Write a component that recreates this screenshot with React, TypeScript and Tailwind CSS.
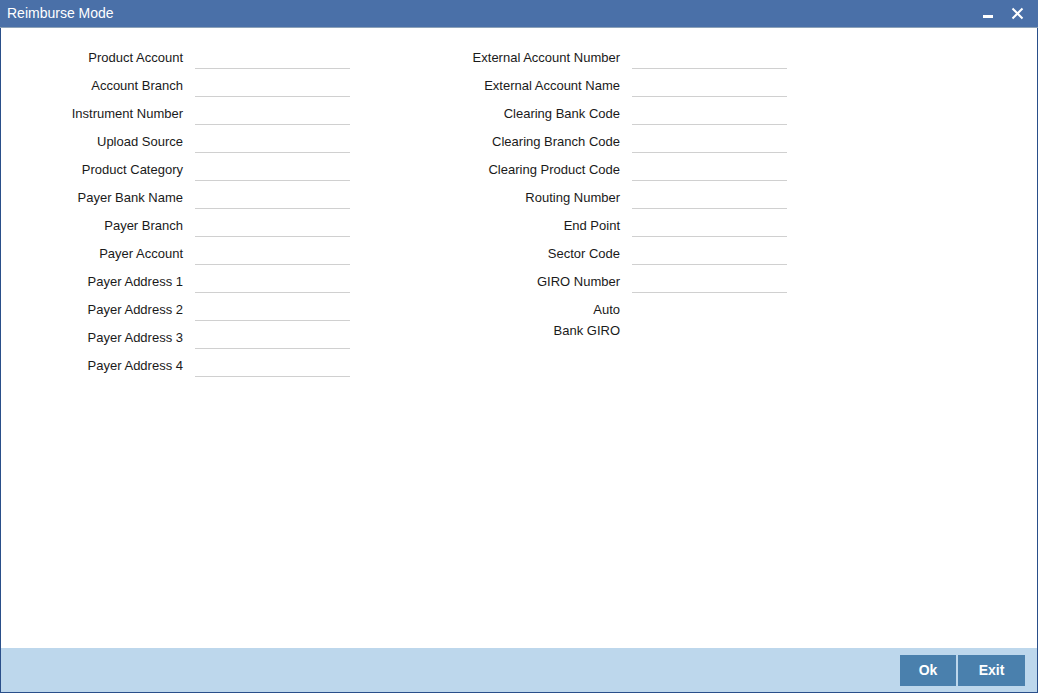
import React from "react";

// Field labels for each column of the reimburse form
const leftFields = [
  "Product Account",
  "Account Branch",
  "Instrument Number",
  "Upload Source",
  "Product Category",
  "Payer Bank Name",
  "Payer Branch",
  "Payer Account",
  "Payer Address 1",
  "Payer Address 2",
  "Payer Address 3",
  "Payer Address 4",
];

const rightFields = [
  "External Account Number",
  "External Account Name",
  "Clearing Bank Code",
  "Clearing Branch Code",
  "Clearing Product Code",
  "Routing Number",
  "End Point",
  "Sector Code",
  "GIRO Number",
];

const FieldRow = ({ label, labelWidth }: { label: string; labelWidth: string }) => (
  <div className="flex h-[28px] items-center">
    <label className={`${labelWidth} pt-[2px] text-right text-[13px] text-[#1a1a1a]`}>{label}</label>
    <div className="ml-[12px] flex h-[28px] w-[155px] items-start pt-[4px]">
      <input
        type="text"
        className="h-[22px] w-full border-b border-[#d0d0d0] bg-transparent outline-none"
      />
    </div>
  </div>
);

export default function App() {
  return (
    <div
      className="flex h-[693px] w-[1038px] flex-col bg-white"
      style={{ fontFamily: '"Liberation Sans", Arial, sans-serif' }}
    >
      {/* Title bar */}
      <div className="flex h-[28px] shrink-0 items-center border-b border-[#8da2b8] bg-[#4a70a8] pl-[7px] pr-[14px]">
        <span className="text-[14px] text-white">Reimburse Mode</span>
        <div className="ml-auto flex items-center gap-[18px]">
          <svg width="10" height="10" viewBox="0 0 10 10">
            <rect x="0" y="6" width="10" height="3" fill="white" />
          </svg>
          <svg width="13" height="13" viewBox="0 0 13 13">
            <path d="M1.5 1.5 L11.5 11.5 M11.5 1.5 L1.5 11.5" stroke="white" strokeWidth="2" />
          </svg>
        </div>
      </div>

      {/* Body */}
      <div className="flex flex-1 border-x border-[#2a4f8a] pt-[15px]">
        <div className="ml-[32px] flex flex-col">
          {leftFields.map((f) => (
            <FieldRow key={f} label={f} labelWidth="w-[150px]" />
          ))}
        </div>
        <div className="ml-[110px] flex flex-col">
          {rightFields.map((f) => (
            <FieldRow key={f} label={f} labelWidth="w-[160px]" />
          ))}
          <div className="flex pt-[4px]">
            <div className="w-[160px] text-right text-[13px] leading-[21px] text-[#1a1a1a]">
              Auto
              <br />
              Bank GIRO
            </div>
          </div>
        </div>
      </div>

      {/* Footer */}
      <div className="flex h-[45px] shrink-0 items-center justify-end border-x border-b border-[#2a4f8a] bg-[#bdd7ec] pr-[12px]">
        <div className="flex gap-[2px]">
          <button className="h-[31px] w-[56px] bg-[#4a80ad] text-[14px] font-bold text-white">
            Ok
          </button>
          <button className="h-[31px] w-[67px] bg-[#4a80ad] text-[14px] font-bold text-white">
            Exit
          </button>
        </div>
      </div>
    </div>
  );
}
